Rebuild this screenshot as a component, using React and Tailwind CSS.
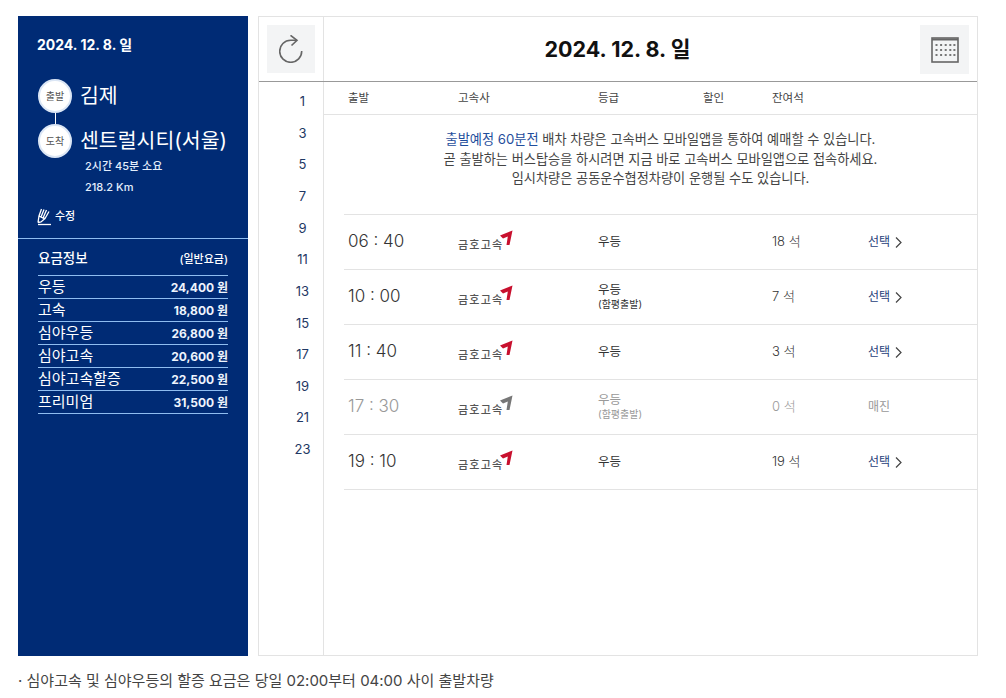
import React from 'react';

const hours = [1, 3, 5, 7, 9, 11, 13, 15, 17, 19, 21, 23];

const fares = [
  ['우등', '24,400 원'],
  ['고속', '18,800 원'],
  ['심야우등', '26,800 원'],
  ['심야고속', '20,600 원'],
  ['심야고속할증', '22,500 원'],
  ['프리미엄', '31,500 원'],
];

const buses = [
  { time: '06 : 40', grade: '우등', seats: '18 석' },
  { time: '10 : 00', grade: '우등', note: '(함평출발)', seats: '7 석' },
  { time: '11 : 40', grade: '우등', seats: '3 석' },
  { time: '17 : 30', grade: '우등', note: '(함평출발)', seats: '0 석', soldOut: true },
  { time: '19 : 10', grade: '우등', seats: '19 석' },
];

const Logo = ({ gray }) => (
  <div className="flex items-start h-[18px]">
    <span className="mt-[5px] text-[11px] leading-[14px] font-medium tracking-[1.2px] text-[#555] whitespace-nowrap">금호고속</span>
    <svg width="14" height="16" viewBox="0 0 14 16" className="-ml-[4px] -mt-[3px] shrink-0">
      <path d="M1 5.5 L13.5 0.5 L10.5 15 L7.5 15 L8.8 6.5 L4 8.5 Z" fill={gray ? '#777777' : '#c8102e'} />
    </svg>
  </div>
);

const App = () => {
  return (
    <div className="w-[1006px] h-[698px] overflow-hidden bg-white pt-4 pl-[18px] font-['Inter','Noto_Sans_CJK_KR',sans-serif] text-[#333]">
      <div className="flex gap-[10px] h-[640px]">
        <aside className="w-[230px] bg-[#002b75] text-white">
          <div className="h-[223px] pt-[20px] pl-[19px] border-b border-[#8fbdf0]">
            <p className="text-[14px] leading-[18px] font-bold">2024. 12. 8. 일</p>
            <div className="flex mt-[25px]">
              <div className="flex flex-col items-center w-[36px]">
                <span className="w-[34px] h-[34px] rounded-full bg-white border-2 border-[#dbe6f5] flex items-center justify-center text-[10px] text-[#555]">출발</span>
                <span className="w-px h-[11px] bg-white"></span>
                <span className="w-[34px] h-[34px] rounded-full bg-white border-2 border-[#dbe6f5] flex items-center justify-center text-[10px] text-[#555]">도착</span>
              </div>
              <div className="ml-[7px]">
                <p className="h-[45px] text-[20.5px] leading-[34px] whitespace-nowrap">김제</p>
                <p className="h-[34px] text-[20.5px] leading-[34px] whitespace-nowrap">센트럴시티(서울)</p>
                <p className="ml-[5px] mt-[-2px] text-[11px] leading-[21px] text-[#e3eefc] font-medium">2시간 45분 소요</p>
                <p className="ml-[5px] text-[11px] leading-[21px] text-[#e3eefc] font-medium">218.2 Km</p>
              </div>
            </div>
            <div className="flex items-center mt-[8px] h-[20px]">
              <svg width="15" height="19" viewBox="0 0 15 19" fill="none" stroke="white" strokeWidth="1.3">
                <path d="M1 17.5 H14" />
                <path d="M1 15.5 L2 9 L4.5 2 M2 9 L4 10 L7 2.5 M4 10 L6 11 L9.5 3 M6 11 L8 11.5 L12 4.5 M8 11.5 L4 15 L1 15.5" />
              </svg>
              <span className="ml-[3px] text-[11px] leading-[14px] font-medium">수정</span>
            </div>
          </div>
          <div className="px-[20px]">
            <div className="flex items-center justify-between h-[37px] pt-[2px] border-b border-[#8fbdf0]">
              <span className="text-[13.5px] font-medium">요금정보</span>
              <span className="text-[11px] pt-[3px] font-medium">(일반요금)</span>
            </div>
            {fares.map(([name, price]) => (
              <div key={name} className="flex items-center justify-between h-[23px] border-b border-[#8fbdf0]">
                <span className="text-[15px]">{name}</span>
                <span className="text-[12px] pt-[1px] font-bold text-[#eef4fd]">{price}</span>
              </div>
            ))}
          </div>
        </aside>

        <section className="w-[720px] border border-[#e3e3e3] flex flex-col">
          <header className="flex h-[65px] shrink-0 border-b border-[#999]">
            <div className="w-[65px] border-r border-[#e3e3e3] flex items-center justify-center pr-[1px]">
              <div className="w-[48px] h-[48px] bg-[#f3f4f5] flex items-center justify-center">
                <svg width="24" height="28" viewBox="0 0 24 28" fill="none" stroke="#666" strokeWidth="1.6">
                  <path d="M18 5.3 H11.7 A11 11 0 1 0 22.7 16" />
                  <path d="M11.5 0.3 L18 5.3 L12.5 10.5" />
                </svg>
              </div>
            </div>
            <div className="flex-1 flex items-center justify-center relative pr-[66px]">
              <h1 className="text-[21.5px] font-bold text-[#111]">2024. 12. 8. 일</h1>
              <div className="absolute right-[8px] top-[8px] w-[49px] h-[49px] bg-[#f3f4f5] flex items-center justify-center">
                <svg width="28" height="26" viewBox="0 0 28 26" fill="none">
                  <rect x="1" y="1" width="26" height="24" stroke="#666" strokeWidth="1.6" />
                  <path d="M1 2.5 H27" stroke="#666" strokeWidth="2" />
                  {[7, 12, 17].map((y) =>
                    [4.5, 9.1, 13.7, 18.3, 22.4].map((x) => <rect key={`${x}-${y}`} x={x} y={y} width="2" height="2" fill="#777" />)
                  )}
                </svg>
              </div>
            </div>
          </header>

          <div className="flex flex-1">
            <nav className="w-[65px] border-r border-[#e3e3e3] pt-[4px] pl-[23px]">
              {hours.map((h) => (
                <div key={h} className="h-[31.65px] flex items-center justify-center text-[13px] text-[#1f3864]">{h}</div>
              ))}
            </nav>
            <div className="flex-1">
              <div className="h-[33px] pl-[24px] pt-[1px] border-b border-[#e3e3e3] grid grid-cols-[110px_140px_105px_69px_1fr] items-center text-[11.5px] text-[#444]">
                <span>출발</span>
                <span>고속사</span>
                <span>등급</span>
                <span>할인</span>
                <span>잔여석</span>
              </div>
              <div className="h-[99px] pt-[15px] text-center text-[13.2px] leading-[19.5px] text-[#444] pl-[29px] pr-[9px] whitespace-nowrap">
                <p><span className="text-[#1f4e9c]">출발예정 60분전</span> 배차 차량은 고속버스 모바일앱을 통하여 예매할 수 있습니다.</p>
                <p>곧 출발하는 버스탑승을 하시려면 지금 바로 고속버스 모바일앱으로 접속하세요.</p>
                <p>임시차량은 공동운수협정차량이 운행될 수도 있습니다.</p>
              </div>
              <div className="ml-[20px] border-t border-[#e3e3e3]">
                {buses.map((b) => (
                  <div key={b.time} className={`h-[55px] pl-[4px] border-b border-[#e3e3e3] grid grid-cols-[110px_140px_174px_96px_1fr] items-center ${b.soldOut ? 'text-[#999]' : 'text-[#333]'}`}>
                    <span className="text-[17px] font-light whitespace-nowrap">{b.time}</span>
                    <Logo gray={b.soldOut} />
                    <div>
                      <p className="text-[12.5px] leading-[16px] -mt-[1px]">{b.grade}</p>
                      {b.note && <p className="text-[10px] leading-[13px]">{b.note}</p>}
                    </div>
                    <span className="text-[13px] font-light">{b.seats}</span>
                    <span className={`text-[12px] flex items-center gap-[5px] ${b.soldOut ? 'text-[#999]' : 'text-[#1f3f7a]'}`}>
                      {b.soldOut ? '매진' : '선택'}
                      {!b.soldOut && (
                        <svg width="7" height="11" viewBox="0 0 7 11" fill="none" stroke="#444" strokeWidth="1.2">
                          <path d="M1 0.5 L6 5.5 L1 10.5" />
                        </svg>
                      )}
                    </span>
                  </div>
                ))}
              </div>
            </div>
          </div>
        </section>
      </div>
      <p className="mt-[15px] text-[15px] leading-[20px] text-[#444] whitespace-nowrap">· 심야고속 및 심야우등의 할증 요금은 당일 02:00부터 04:00 사이 출발차량</p>
    </div>
  );
};

export default App;
